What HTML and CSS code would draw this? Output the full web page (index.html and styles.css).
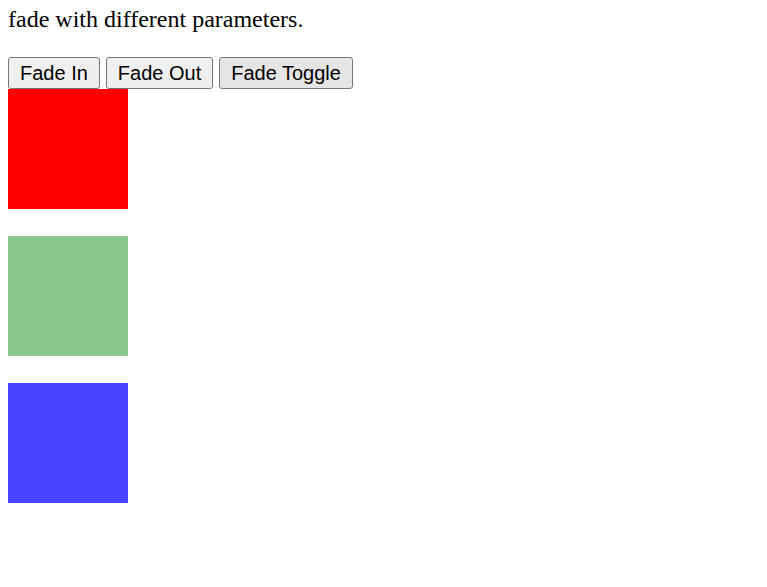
FILE: index.html
```html
<!DOCTYPE html>
<html>
<head>
<meta charset="utf-8">
<link rel="stylesheet" href="styles.css">
</head>
<body>
<p class="intro">fade with different parameters.</p>
<div class="controls"><button class="btn">Fade In</button><button class="btn">Fade Out</button><button class="btn btn-active">Fade Toggle</button></div>
<div class="box box-red"></div>
<div class="box box-green"></div>
<div class="box box-blue"></div>
</body>
</html>
```
FILE: styles.css
```css
body {
  margin: 8px;
  font-family: "Liberation Serif", "Times New Roman", serif;
}
.intro {
  margin: 0 0 27px 0;
  font-size: 24px;
  line-height: 22px;
}
.controls {
  display: flex;
  gap: 6px;
}
.btn {
  font-family: "Liberation Sans", Arial, sans-serif;
  font-size: 20px;
  height: 32px;
  padding: 1px 11px;
  margin: 0;
  border: 1px solid #767676;
  border-radius: 3px;
  background: #efefef;
  color: #000;
}
.btn-active {
  background: #e5e5e5;
}
.box {
  width: 120px;
  height: 120px;
}
.box + .box {
  margin-top: 27px;
}
.box-red { background: #ff0000; }
.box-green { background: #8bc68b; }
.box-blue { background: #4444ff; }
```
